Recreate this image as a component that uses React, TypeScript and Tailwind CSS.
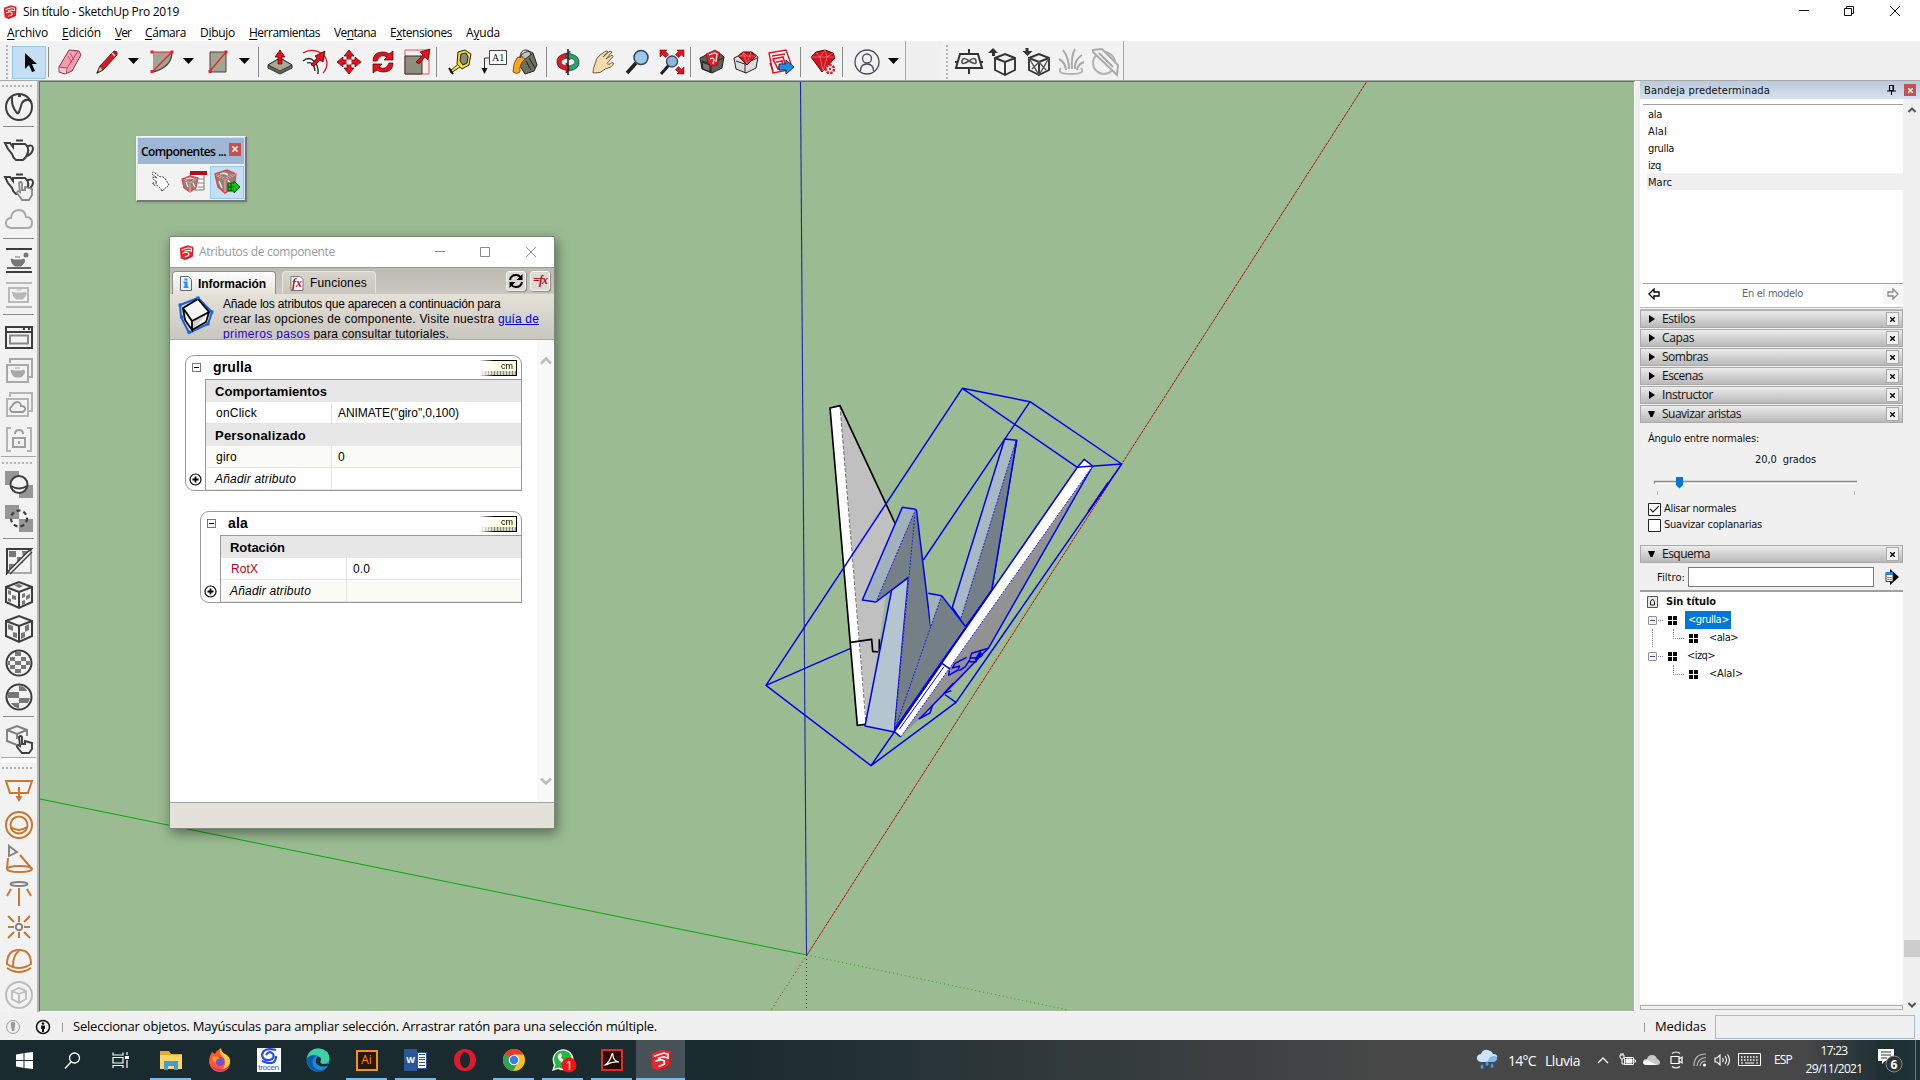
import React, { useLayoutEffect, useRef } from "react";

/* Text run whose tracking is computed so that it fills a given width. */
function T({ w, className = "", children }: { w: number; className?: string; children: React.ReactNode }) {
  const ref = useRef<HTMLSpanElement>(null);
  useLayoutEffect(() => {
    const el = ref.current;
    if (!el) return;
    el.style.letterSpacing = "0px";
    const n = (el.textContent || "").length;
    el.style.letterSpacing = `${(w - el.getBoundingClientRect().width) / n}px`;
  }, [w]);
  return (
    <span ref={ref} className={`inline-block shrink-0 whitespace-pre ${className}`}>
      {children}
    </span>
  );
}

const UI = "font-['Open_Sans',sans-serif]";
const TAHOMA = "font-['DejaVu_Sans_Condensed','DejaVu_Sans',sans-serif]";

function Svg({ s = 26, className = "", children }: { s?: number; className?: string; children: React.ReactNode }) {
  return (
    <svg width={s} height={s} viewBox={`0 0 ${s} ${s}`} fill="none" className={`block shrink-0 overflow-visible ${className}`}>
      {children}
    </svg>
  );
}

function Logo({ s = 14 }: { s?: number }) {
  return (
    <svg width={s} height={s} viewBox="0 0 14 14" className="block shrink-0">
      <path d="M.8 2.800L8 .3l5.500 1.500-.7 9.200L5.500 14l-4-1.700z" fill="#e8242c" />
      <path d="M2.500 4.600l6.300-2 2.700.7v2.400L8.600 5 5 6M3.200 7.800l3.600-1 2.300.7v2.200l-3.600 1.500" stroke="#fff" strokeWidth="1" fill="none" />
      <path d="M13 3l-.5 7.500-7 3" stroke="#b3141d" strokeWidth="0.600" fill="none" />
    </svg>
  );
}

/* ---------- top toolbar ---------- */

const R = "#e8101c";

const Eraser = () => (
  <Svg>
    <path d="M2 18L12 1l10 1 2 4-9 16-7 3-6-2z" fill="#f79cb0" stroke="#7d3a48" />
    <path d="M2 18l8 1L21 2M10 19l-1 6" stroke="#a04f60" />
    <path d="M2.500 19l7 .8-.8 4.700-6-2z" fill="#fbc3d0" />
    <path d="M13 4l4 7m-6-4l4 7" stroke="#a04f60" strokeWidth=".8" />
  </Svg>
);
const Pencil = () => (
  <Svg>
    <path d="M3 24l3-7L20 2l3 1v3L9 21z" fill="#d41921" stroke="#5a1a1a" />
    <path d="M3 24l3-7 3 4z" fill="#e3c18f" stroke="#333" strokeWidth=".8" />
    <path d="M2 25l2-3 1 1z" fill="#111" />
    <path d="M18 4l3 3" stroke="#ddd" strokeWidth="1.500" />
  </Svg>
);
const Arc = () => (
  <Svg>
    <path d="M4 3h19q0 15-19 20z" fill="#a3a38f" />
    <path d="M23 3q0 15-19 20" stroke="#444" strokeWidth="1.300" />
    <path d="M23 3L3 23M3 3h20" stroke="#f01c26" strokeWidth="1.200" />
    <path d="M1.500 1.500h3v3h-3zM21.500 1.500h3v3h-3zM1.500 21h3v3h-3z" fill="#f01c26" />
  </Svg>
);
const RectTool = () => (
  <Svg>
    <path d="M5 3h16v20H5z" fill="#a3a38f" stroke="#444" />
    <path d="M21 3L5 22" stroke="#f01c26" strokeWidth="1.200" />
    <path d="M19.500 1.500h3v3h-3zM3.500 21h3v3h-3z" fill="#f01c26" />
  </Svg>
);
const PushPull = () => (
  <Svg>
    <path d="M1 16l12-7 12 7v3l-12 6-12-6z" fill="#66665a" stroke="#333" />
    <path d="M1 16l12-7 12 7-12 6z" fill="#a8a893" stroke="#333" />
    <path d="M11 15V8H8l5-7 5 7h-3v7z" fill={R} stroke="#400" strokeWidth=".7" />
  </Svg>
);
const FollowMe = () => (
  <Svg>
    <path d="M1 4C10-2 24 3 25 14q0 6-4 10" stroke={R} strokeWidth="1.300" />
    <path d="M1 12q6-5 11 0t4 13M5 14q7-2 8 8" stroke="#222" strokeWidth="1.300" />
    <path d="M9 16l6-7-2-2 10-5-2 11-3-2-6 6z" fill={R} stroke="#400" strokeWidth=".8" />
  </Svg>
);
const Move = () => (
  <Svg>
    <path d="M13 1l5 6h-3v4h4V8l6 5-6 5v-3h-4v4h3l-5 6-5-6h3v-4H7v3l-6-5 6-5v3h4V7H8z" fill={R} stroke="#400" strokeWidth=".7" />
    <path d="M10.500 10.500h5v5h-5z" fill="#f0f0f0" />
  </Svg>
);
const Rotate = () => (
  <Svg>
    <path d="M3 12q0-9 10-9 4 0 6 2l4-3v9h-9l3-3q-7-4-10 4z" fill={R} stroke="#400" strokeWidth=".7" />
    <path d="M23 14q0 9-10 9-4 0-6-2l-4 3v-9h9l-3 3q7 4 10-4z" fill={R} stroke="#400" strokeWidth=".7" />
  </Svg>
);
const Scale = () => (
  <Svg>
    <path d="M1 1h24v24H1z" fill="#f8eeee" stroke="#e8505a" />
    <path d="M1 7h17v18H1z" fill="#8f8f7d" stroke="#333" />
    <path d="M12 13l7-7-3-3 10-3-2 11-3-3-6 7z" fill={R} stroke="#400" strokeWidth=".7" />
  </Svg>
);
const Tape = () => (
  <Svg>
    <path d="M11 3l7-2 6 4-2 11-7 4-5-5z" fill="#f4dd1a" stroke="#222" />
    <path d="M14 5l5-1 2 4-1 6-4 2-3-4z" fill="#888" stroke="#222" />
    <path d="M10 16l-7 6 1 2 9-6" fill="#f4dd1a" stroke="#333" />
    <path d="M2 19l4 6" stroke="#111" strokeWidth="2" />
  </Svg>
);
const TextTool = () => (
  <Svg>
    <path d="M8.500 1.500h17v14h-17z" fill="#fff" stroke="#444" />
    <text x="11" y="11.500" fontSize="10" fontFamily="Liberation Serif" fill="#111">
      A1
    </text>
    <path d="M8 9H3.500v12" stroke="#333" />
    <path d="M.5 19h6l-3 6z" fill="#111" />
  </Svg>
);
const Bucket = () => (
  <Svg>
    <path d="M11 9l10-5 4 12-3 6-9 3-5-8z" fill="#6f6f60" stroke="#222" />
    <path d="M9 6q7-6 12-2l-9 7z" fill="#b9c4c4" stroke="#333" />
    <path d="M13 10Q9 6 5 9q-4 5-4 14 4 3 7 0-1-8 5-13z" fill="#f5a623" stroke="#6b3d00" strokeWidth=".8" />
    <path d="M17 9l6 10M14 12l5 9M8 9Q8 1 14 1q4 0 5 5" stroke="#222" />
  </Svg>
);
const Orbit = () => (
  <Svg>
    <path d="M12 4Q1 6 2 14q1 6 9 7v3l5-5-5-5v3q-5-1-5-4 0-3 6-4z" fill="#d3202c" stroke="#500" strokeWidth=".7" />
    <path d="M14 22q11-2 10-10-1-6-9-7V2l-5 5 5 4V9q5 1 5 4t-6 4z" fill="#2ba362" stroke="#043" strokeWidth=".7" />
    <path d="M13 0v26" stroke="#222" strokeWidth="1.600" />
  </Svg>
);
const Hand = () => (
  <Svg>
    <path
      d="M3 24q0-5 2-9 1-6 5-9l6-4 2 .5-5 5.500 7-6 2 1-6 7 6-4 1 1.500-6 7q1 2 5-1l2 1q-3 5-8 5l-6 4z"
      fill="#f3dcae"
      stroke="#5f5138"
      strokeWidth=".9"
    />
  </Svg>
);
const Zoom = () => (
  <Svg>
    <path d="M3 24l9-10" stroke="#222" strokeWidth="3.600" />
    <circle cx="17" cy="8.500" r="7" fill="#9fc6e8" stroke="#345" strokeWidth="1.500" />
  </Svg>
);
const ZoomExt = () => (
  <Svg>
    <path d="M2 25l8-9" stroke="#222" strokeWidth="3" />
    <circle cx="13" cy="12.500" r="5.500" fill="#8fb6d8" stroke="#345" strokeWidth="1.300" />
    <path d="M1 1h7L6.500 2.500l3 3-3 3-3-3L1 8zM25 1h-7l1.500 1.500-3 3 3 3 3-3L25 8zM25 25h-7l1.500-1.500-3-3 3-3 3 3L25 18z" fill={R} stroke="#400" strokeWidth=".5" />
  </Svg>
);
const Warehouse = ({ gem = false }: { gem?: boolean }) => (
  <Svg>
    <path d="M1 9l6-3 12-3 6 5-2 11-10 5-10-4z" fill={gem ? "#ddd" : "#5f5f54"} stroke="#222" />
    <path d="M3 12l9 3 12-6M12 15v9" stroke="#222" />
    {gem ? (
      <>
        <path d="M5 7l5-4h8l5 4-9 9z" fill="#cf1722" stroke="#500" />
        <path d="M5 7h18M10 3l4 12 4-12M8 7l3-3 3 3" stroke="#ff8080" strokeWidth=".7" />
      </>
    ) : (
      <>
        <path d="M7 5l9-4 5 3-3 12-8 2z" fill="#df1f29" stroke="#900" strokeWidth=".6" />
        <path d="M10 6q6-3 8-1l-1 8M11 10q4-2 4 1l-1 4" stroke="#fff" strokeWidth="1.200" />
        <path d="M3 13l8 3v7l-7-3z" fill="#77776a" stroke="#222" />
      </>
    )}
  </Svg>
);
const SendLayout = () => (
  <Svg>
    <path d="M1 4l17-3 5 14-2 6-16 3z" fill="#fff" stroke={R} strokeWidth="1.400" />
    <path d="M4 7l13-2M5 10l10-2 3 10-8 2zM8 13l6-1 1 5-5 1M2 14l3 8" stroke={R} strokeWidth="1.600" />
    <path d="M11 15h7v-4l8 7-8 7v-4h-7z" fill="#1e8fe8" stroke="#0a3a66" />
  </Svg>
);
const Gem = () => (
  <Svg>
    <path d="M1 8l5-5 9-2 8 3 2 5-13 14z" fill="#cf1722" stroke="#600" />
    <path d="M1 8h24M6 3l4 5 3 14M15 1l-5 7M23 4l-6 4-4 14M15 1l2 7" stroke="#ff7474" strokeWidth=".7" />
    <circle cx="20" cy="20" r="4" fill="#f0f0f0" stroke="#c62a33" strokeWidth="2.500" strokeDasharray="2.500 1" />
    <circle cx="20" cy="20" r="1.200" fill="#c62a33" />
  </Svg>
);
const User = () => (
  <Svg>
    <circle cx="13" cy="13" r="12" stroke="#4a4a5a" strokeWidth="1.300" />
    <circle cx="13" cy="9.500" r="4.500" stroke="#4a4a5a" strokeWidth="1.300" />
    <path d="M6.500 22q0-7 6.500-7t6.500 7" stroke="#4a4a5a" strokeWidth="1.300" />
  </Svg>
);

const Drop = ({ className = "" }: { className?: string }) => (
  <div className={`flex w-5 shrink-0 justify-center pb-[3px] ${className}`}>
    <svg width="11" height="6" viewBox="0 0 11 6">
      <path d="M0 0h11L5.500 6z" fill="#000" />
    </svg>
  </div>
);
const Tool = ({ className = "", children }: { className?: string; children: React.ReactNode }) => (
  <div className={`flex h-[34px] w-[34px] shrink-0 items-center justify-center ${className}`}>{children}</div>
);
const VSep = ({ className = "" }: { className?: string }) => <div className={`h-[30px] w-px shrink-0 bg-[#8a8a8a] ${className}`} />;
const VGrip = () => (
  <div className="flex w-[3px] shrink-0 flex-col gap-[2px]">
    {Array.from({ length: 9 }, (_, i) => (
      <div key={i} className="h-[2px] w-[2px] bg-[#b4b4b4]" />
    ))}
  </div>
);

const Cube = ({ arrow, children }: { arrow: string; children?: React.ReactNode }) => (
  <Svg s={28}>
    <path d="M6 10l10-4 10 4v12l-10 5-10-5zM6 10l10 4 10-4M16 14v13" stroke="#333" strokeWidth="1.900" />
    {children}
    <path d={arrow} fill="#333" />
  </Svg>
);

function TopToolbar() {
  return (
    <div className="flex h-[40px] shrink-0 border-b border-[#a9a9a9] bg-[#f0f0f0]">
      <div className="flex w-[906px] shrink-0 items-center border-r border-[#a9a9a9] bg-[#f2f2f2] pl-1.5 pt-[3px]">
        <VGrip />
        <div className="ml-[3px] flex h-[33px] w-[34px] shrink-0 items-center justify-center border border-[#90c8f6] bg-[#c5dff5]">
          <Svg>
            <path d="M9 4v16l4-4 3 7 3-1-3-7h5z" fill="#000" />
          </Svg>
        </div>
        <VSep className="ml-[2px]" />
        <Tool className="ml-[4px]"><Eraser /></Tool>
        <Tool className="ml-[3px]"><Pencil /></Tool>
        <Drop className="-ml-px" />
        <Tool className="ml-[2px]"><Arc /></Tool>
        <Drop className="-ml-px" />
        <Tool className="ml-[3px]"><RectTool /></Tool>
        <Drop className="-ml-px" />
        <VSep className="ml-[4px]" />
        <Tool className="ml-[4px]"><PushPull /></Tool>
        <Tool className="ml-px"><FollowMe /></Tool>
        <Tool><Move /></Tool>
        <Tool><Rotate /></Tool>
        <Tool><Scale /></Tool>
        <VSep className="ml-[2px]" />
        <Tool className="ml-[6px]"><Tape /></Tool>
        <Tool><TextTool /></Tool>
        <Tool className="-ml-[3px]"><Bucket /></Tool>
        <VSep className="ml-[4px]" />
        <Tool className="ml-[4px]"><Orbit /></Tool>
        <Tool className="ml-px"><Hand /></Tool>
        <Tool><Zoom /></Tool>
        <Tool className="ml-px"><ZoomExt /></Tool>
        <VSep className="ml-px" />
        <Tool className="ml-[4px]"><Warehouse /></Tool>
        <Tool><Warehouse gem /></Tool>
        <Tool className="ml-px"><SendLayout /></Tool>
        <VSep className="ml-[2px]" />
        <Tool className="ml-[5px]"><Gem /></Tool>
        <VSep className="ml-[2px]" />
        <Tool className="ml-[7px]"><User /></Tool>
        <Drop className="-ml-px" />
      </div>
      <div className="ml-[36px] flex w-[182px] shrink-0 items-center border-r border-[#a9a9a9] bg-[#f2f2f2] pl-[4px] pt-[3px]">
        <VGrip />
        <Tool className="ml-[3px]">
          <Svg s={28}>
            <path d="M5 6h18l4 14H1zM14 1v5m0 14v6M0 14h3m22 0h3" stroke="#333" strokeWidth="2" />
            <path d="M14 13q-6-5-7 0t7 0q6-5 7 0t-7 0z" stroke="#555" strokeWidth="1.700" />
          </Svg>
        </Tool>
        <Tool><Cube arrow="M4 0l5 5H6v3H3V5H-1z" /></Tool>
        <Tool>
          <Cube arrow="M2.500 0h3v3h4l-5 5-5-5h3z">
            <path d="M6 10l10 17 10-17M9 21l7-7 7 8" stroke="#555" strokeWidth="1.400" />
          </Cube>
        </Tool>
        <Tool>
          <Svg s={28}>
            <path d="M9 22Q8 14 2 11M12 21Q12 10 6 2M15 21Q14 8 18 1M18 21q-1-9 7-14M20 22q1-6 7-8" stroke="#a9a9a9" strokeWidth="2" />
            <path d="M4 20q-5 6 10 6t10-6" stroke="#b4b4b4" strokeWidth="2" />
          </Svg>
        </Tool>
        <Tool>
          <Svg s={28}>
            <circle cx="13" cy="15" r="11" stroke="#b4b4b4" strokeWidth="2" />
            <path d="M2 2l9-1 16 16-1 10L2 4zM8 5l14 14" fill="#f2f2f2" stroke="#a9a9a9" strokeWidth="1.900" />
          </Svg>
        </Tool>
      </div>
    </div>
  );
}

/* ---------- left toolbar ---------- */

const D = "#3d3d3d";
const G = "#a9a9a9";
const O = "#c87830";
const POT = "M8 7h12q4 3 3 8-1 5-5 8h-7q-3-2-4-6l-4-5L0 6h5l3 4zM11 3.500h7M23 9q5-2 5 3-1 5-6 7";
const POT_SMALL = "M8 12l3 1h7l3-1q2 3-3 7h-6q-3-1-4-7zM12 10h5";

const LTool = ({ children }: { children: React.ReactNode }) => (
  <div className="flex h-[34px] shrink-0 items-center justify-center">
    <Svg s={28}>{children}</Svg>
  </div>
);
const HSep = ({ className = "h-2" }: { className?: string }) => (
  <div className={`shrink-0 px-[2px] pt-[2px] ${className}`}>
    <div className="h-px bg-[#8a8a8a]" />
  </div>
);
const HGrip = ({ className = "" }: { className?: string }) => (
  <div className={`flex shrink-0 gap-[2px] pl-px ${className}`}>
    {Array.from({ length: 8 }, (_, i) => (
      <div key={i} className="h-[2px] w-[2px] bg-[#b4b4b4]" />
    ))}
  </div>
);
const Checker = ({ c }: { c: string[] }) => (
  <>
    {c.map((d) => (
      <path key={d} d={d} fill="#777" />
    ))}
  </>
);

function LeftToolbar() {
  return (
    <div className="flex w-[39px] shrink-0 flex-col border-r-2 border-[#b4b4b4] bg-[#f2f2f2] pl-px pr-px">
      <HGrip className="h-[9px] pt-[4px]" />
      <LTool>
        <circle cx="14" cy="14" r="13" stroke={D} strokeWidth="2" />
        <path d="M7 4q-1 9 5 16 1 1 2-1l3-9q3-5 9-2M13 3q3 0 3 0" stroke={D} strokeWidth="2" />
      </LTool>
      <HSep className="h-[10px]" />
      <LTool><path d={POT} stroke={D} strokeWidth="2" /></LTool>
      <LTool>
        <path d={POT} stroke={D} strokeWidth="2" />
        <path d="M14 12q2-2 3 0v7h3v-3l7 2v6l-3 5h-7l-5-7q0-3 3-1z" fill="#f2f2f2" stroke="#888" strokeWidth="1.800" />
      </LTool>
      <LTool><path d="M6 23q-6-1-5-6 1-4 5-4 1-8 8-8 6 0 7 7 6 0 6 6 0 5-5 5z" stroke={G} strokeWidth="2" /></LTool>
      <HSep />
      <LTool>
        <path d="M1 2h26M1 25h26" stroke={D} strokeWidth="2" />
        <path d="M2 21h24" stroke="#666" strokeWidth="2" />
        <circle cx="21" cy="8" r="2.500" fill="#777" />
        <path d={POT_SMALL} fill="#777" stroke="#777" transform="translate(-2)" />
      </LTool>
      <LTool>
        <path d="M1 2h26M1 26h26M4 7h19v14H4z" stroke="#b9b9b9" strokeWidth="2" />
        <path d={POT_SMALL} fill="#b9b9b9" stroke="#b9b9b9" transform="translate(-.5 -1)" />
      </LTool>
      <HSep />
      <LTool>
        <path d="M1 4h26v21H1zM1 9h26M18 6h2M23 6h2" stroke={D} strokeWidth="2" />
        <path d="M5 12.500h18v8H5z" stroke="#888" strokeWidth="2" />
      </LTool>
      <LTool>
        <path d="M5 6V2h22v18h-4" stroke={G} strokeWidth="2" />
        <path d="M2 8h21v17H2z" stroke={G} strokeWidth="2" />
        <path d={POT_SMALL} fill={G} stroke={G} transform="translate(-2 1)" />
      </LTool>
      <LTool>
        <path d="M5 6V2h22v18h-4M2 8h21v17H2z" stroke="#b4b4b4" strokeWidth="2" />
        <path d="M7 21q-4-3 0-6 2-4 6-4 3 1 3 4 5 0 4 4l-2 2z" stroke="#999" strokeWidth="1.800" />
      </LTool>
      <LTool>
        <path d="M6 3H2v23h4M22 3h4v23h-4" stroke="#b4b4b4" strokeWidth="2" />
        <path d="M8 13h12v9H8zM10 9q0-4 4-4t4 4" stroke="#a0a0a0" strokeWidth="2" />
        <path d="M14 16v3" stroke="#a0a0a0" strokeWidth="2" />
      </LTool>
      <div className="h-px shrink-0 bg-[#a9a9a9]" />
      <HGrip className="h-[11px] pt-[5px]" />
      <LTool>
        <path d="M0 0h14v14H0zM14 14h14v13H14z" fill="#969696" />
        <circle cx="14" cy="13.500" r="8.500" fill="#f2f2f2" stroke={D} strokeWidth="2" />
        <path d="M6 15q8 5 16 0" stroke={D} strokeWidth="2" />
      </LTool>
      <LTool>
        <path d="M0 0h14v14H0zM14 14h14v13H14z" fill="#969696" />
        <circle cx="14" cy="13.500" r="8" stroke={D} strokeWidth="2.200" strokeDasharray="4 3" />
      </LTool>
      <HSep />
      <LTool>
        <path d="M26 2v24H2" stroke={G} strokeWidth="2" />
        <Checker c={["M4 4h7v6H4z", "M12 10h6v6h-6z", "M17 4h7l-6 6z", "M4 17h7l-7 7z"]} />
        <path d="M2 26V2h24z" stroke={D} strokeWidth="2" />
        <path d="M25 5L5 25" stroke="#f2f2f2" strokeWidth="2" />
        <path d="M27 5L5 27" stroke={D} strokeWidth="1.500" />
      </LTool>
      <LTool>
        <path d="M1 6l13-5 13 5v15l-13 6-13-6zM1 6l13 5 13-5M14 11v16" stroke={D} strokeWidth="2" />
        <Checker c={["M3 9l3 1v4l-3-1z", "M7 14l4 1v4l-4-1z", "M3 17l3 1v3l-3-1z", "M17 13l3-1v4l-3 1z", "M21 15l4-2v4l-4 2z", "M17 20l3-1v4l-3 1z", "M9 4l5-1 4 2-4 2z"]} />
      </LTool>
      <LTool>
        <path d="M1 6l13-5 13 5v15l-13 6-13-6zM1 6l13 5 13-5M14 11v16" stroke={D} strokeWidth="2" />
        <Checker c={["M3 9l5 2v5l-5-2z", "M8 17l4 1v5l-4-1z", "M20 11l4-2v6l-4 2z", "M16 18l4-1v5l-4 2z"]} />
      </LTool>
      <LTool>
        <circle cx="14" cy="14" r="12.500" stroke={D} strokeWidth="2" />
        <Checker c={["M10 3h6v4h-6z", "M5 8h5v4H5z", "M16 8h5v4h-5z", "M10 12h6v4h-6z", "M3 12h2v4H3z", "M21 12h4v4h-4z", "M5 16h5v4H5z", "M16 16h5v4h-5z", "M10 20h6v4h-6z"]} />
      </LTool>
      <LTool>
        <circle cx="14" cy="14" r="12.500" stroke={D} strokeWidth="2" />
        <Checker c={["M14 3q6 0 8 5h-8z", "M3 9h11v6H3z", "M14 15h11l-2 5h-9z", "M6 20h8v5q-5 0-8-5z"]} />
      </LTool>
      <HSep />
      <LTool>
        <path d="M12 20l-10-4V5l10-4 10 4v6M2 5l10 4 10-4M12 9v5" stroke="#808080" strokeWidth="1.900" />
        <path d="M14 12q2-2 3 0v7h3v-3l7 2v6l-3 4h-7l-5-6q0-3 3-1z" fill="#f2f2f2" stroke={D} strokeWidth="1.900" />
      </LTool>
      <div className="mt-px h-[6px] shrink-0 border-t border-[#a9a9a9] bg-[#fafafa]" />
      <HGrip className="h-[11px] pt-[4px]" />
      <LTool>
        <path d="M1 4h26l-4 12H5zM14 10v11" stroke={O} strokeWidth="2" />
        <path d="M10.500 19h7l-3.500 6z" fill={O} />
      </LTool>
      <LTool>
        <circle cx="14" cy="14" r="13" stroke={O} strokeWidth="2" />
        <circle cx="14" cy="14" r="8.500" stroke={O} strokeWidth="2" />
        <path d="M6 16q8 6 16 0" stroke={O} strokeWidth="2" />
      </LTool>
      <LTool>
        <path d="M4 1l8 6-8 4z" stroke="#808080" strokeWidth="1.900" />
        <path d="M3 13l-1 11M15 10l12 14" stroke={O} strokeWidth="2" />
        <ellipse cx="14.500" cy="24" rx="12.500" ry="3" stroke={O} strokeWidth="2" />
      </LTool>
      <LTool>
        <ellipse cx="14" cy="5" rx="8.500" ry="2" stroke="#808080" strokeWidth="1.900" />
        <path d="M14 9v18M6 10l-4 7M22 10l4 7" stroke={O} strokeWidth="2" />
      </LTool>
      <LTool>
        <circle cx="14" cy="14" r="3.200" stroke="#808080" strokeWidth="1.900" />
        <path d="M14 3v6m0 10v6M3 14h6m10 0h6M3 3l6 6m10 10l6 6M3 25l6-6M19 9l6-6" stroke={O} strokeWidth="2" />
      </LTool>
      <LTool>
        <path d="M2 17Q2 3 14 3t12 14q-12 8-24 0zM8 19Q8 8 14 4M2 21q12 8 24 0" stroke={O} strokeWidth="2" />
      </LTool>
      <LTool>
        <circle cx="14" cy="14" r="13" stroke="#bdbdbd" strokeWidth="2" />
        <path d="M7 10l7-3 7 3v8l-7 4-7-4zM7 10l7 3 7-3M14 13v9" stroke="#bdbdbd" strokeWidth="1.900" />
      </LTool>
    </div>
  );
}

/* ---------- 3D viewport ---------- */

function Scene() {
  const B = "#0000f5";
  const dark = "#758086";
  return (
    <svg width="1594" height="929" viewBox="40 82 1594 929" className="block">
      <g strokeWidth="1">
        <path d="M800.500 82L806.500 955" stroke="#1c24b4" strokeWidth="1.100" />
        <path d="M807 955L1366.500 82" stroke="#b80808" strokeDasharray="3 .8" />
        <path d="M40 799L807 955" stroke="#08a808" />
        <path d="M807 955L1068 1010" stroke="#1f9a1f" strokeDasharray="1 3" />
        <path d="M807 955L771 1010" stroke="#b80808" strokeDasharray="1 3" />
        <path d="M806.500 955V1010" stroke="#1c24b4" strokeDasharray="1 3" />
      </g>
      <g transform="translate(740 370) scale(.33333)" strokeLinejoin="round">
        <path d="M300 108L466 462 420 800 380 1065z" fill="#c0c0c0" />
        <path d="M270 114l30-7 80 956-28 3z" fill="#fff" />
        <path d="M300 108L378 1062" stroke="#555" strokeWidth="2.500" strokeDasharray="12 5" />
        <path d="M466 462L300 107l-30 7 82 952 30-4M332 817l63-9 3 36 16 2M418 846v-38" fill="none" stroke="#000" strokeWidth="5" />
        <path
          d="M330 836L78 946 667 55 870 95 1145 282 648 997 393 1187 78 946M667 55l345 237 133-10M870 95L550 570M648 997l-36-25M393 1187L1012 292"
          fill="none"
          stroke={B}
          strokeWidth="4.500"
        />
        <g stroke={B} strokeWidth="4.500">
          <path d="M794 207l36 4-75 450-80 107-38-56z" fill="#a9b9c4" />
          <path d="M828 213L755 660 675 768 662 748z" fill={dark} stroke="none" />
          <path d="M828 213L662 748" strokeWidth="2.500" strokeDasharray="6 4" />
          <path d="M830 211L755 661" />
          <path d="M505 622l-50 38-80 408 88 18z" fill="#b5c5cf" />
          <path d="M487 412l40 6-119 278-41-6z" fill="#a1b2bc" stroke="none" />
          <path d="M527 418L505 622l-97 74z" fill={dark} stroke="none" />
          <path d="M527 418l-40-6-120 278 41 6 97-74" fill="none" />
          <path d="M527 418L572 770 463 1085 505 622z" fill={dark} stroke="none" />
          <path d="M527 418L408 696M524 440L463 1085" strokeWidth="2.500" strokeDasharray="6 4" />
          <path d="M529 418l43 352" />
          <path d="M565 670l40 7-33 93z" fill="#a1b2bc" stroke="none" />
          <path d="M565 670l40 7" />
          <path d="M605 677l70 91L463 1082 572 770z" fill={dark} stroke="none" />
          <path d="M605 677L463 1082" strokeWidth="2.500" strokeDasharray="6 4" />
          <path d="M605 677l70 91" />
          <path d="M1058 288L745 835 640 950 540 1045 482 1101z" fill="#929292" stroke="none" />
          <path d="M1058 288L745 835 540 1045" fill="none" />
          <path d="M1035 268l23 20L482 1101 463 1085 1012 290z" fill="#fff" stroke="none" />
          <path d="M1058 288L482 1101" strokeWidth="2.500" strokeDasharray="6 4" />
          <path d="M482 1101l-19-16L1012 292l21-24 25 20" fill="none" />
          <path d="M1012 292l46-4M603 878l28 20M463 1078L755 660" fill="none" />
          <path d="M470 1076L605 883M478 1078L612 890" strokeWidth="3" />
          <path d="M745 835l-50 15-5 15 22-2-4 12-20 0M680 862l-35 18-8 14 22-6-5 12-28 16 2-14M690 868l-14 22-18 12" fill="none" />
          <path d="M720 845l-14 24 20-12z" fill={B} />
          <path d="M640 940l-28 30 22-8M578 1005l-8 24-34 18" fill="none" />
          <path d="M1105 338L1045 425" strokeWidth="6" />
        </g>
      </g>
    </svg>
  );
}

/* ---------- floating windows ---------- */

function ComponentsPalette() {
  return (
    <div className="absolute left-[96px] top-[54px] h-[66px] w-[111px] border border-r-2 border-b-2 border-[#f4f8fb] border-r-[#777] border-b-[#777] bg-[#d8e4f0] p-px shadow-sm">
      <div className="flex h-[26px] items-center bg-[#9db7d4] pl-[3px]">
        <T w={85} className={`pt-px text-[12px] font-semibold ${UI}`}>Componentes ...</T>
        <div className="mb-[4px] ml-[3px] flex h-[13px] w-[12px] shrink-0 items-center justify-center bg-[#c75050]">
          <svg width="6" height="6" viewBox="0 0 6 6"><path d="M.5.5l5 5m0-5l-5 5" stroke="#fff" strokeWidth="1.500" /></svg>
        </div>
      </div>
      <div className="flex h-[36px] items-center bg-[#f2f2f2] pl-[5px]">
        <div className="flex w-[34px] justify-center">
          <Svg s={20}>
            <path d="M12 19q-3-5-6-6-4 0-3-2l4 0-2-3q-3-1-2-3l4 1-5-4q0-3 3-1l5 4q4-1 6 3l3 5z" fill="#fff" stroke="#333" strokeDasharray="2 1" />
          </Svg>
        </div>
        <div className="flex w-[33px] justify-center">
          <Svg s={26}>
            <path d="M9 4h14v17H13z" fill="#fff" stroke="#777" />
            <path d="M9 2h17v4H9z" fill="#b80d1a" />
            <path d="M16 10h7m-6 4h6m-6 4h6" stroke="#888" />
            <path d="M1 10l8-3 8 2-2 10-6 4-6-4z" fill="#8d8474" stroke="#e3404c" strokeWidth="1.200" />
            <path d="M3 11l6 3 7-4M9 14v9M5 13l2 5M12 14l2 4M5 10l4-1 4 1" stroke="#eee" strokeWidth="1.200" />
            <path d="M2 11l7 3 7-4M9 14v9" stroke="#e3404c" strokeWidth=".8" />
          </Svg>
        </div>
        <div className="flex h-[33px] w-[34px] items-center justify-center border border-[#90c8f6] bg-[#c5dff5]">
          <Svg s={26}>
            <path d="M1 5l12-4 9 4-2 13-9 6-7-6z" fill="#8d8474" stroke="#e3404c" strokeWidth="1.400" />
            <path d="M2 6l9 4 11-5M11 10v13M6 5l4-1 4 2M5 12l3 7M14 11l3 5" stroke="#eee" strokeWidth="1.500" />
            <path d="M2 6l9 4 11-5M11 10v13" stroke="#e3404c" />
            <path d="M14 14h6v-2l6 6-6 6v-2h-6z" fill="#12c412" stroke="#064d06" />
            <path d="M17 14v8M14 18h6" stroke="#064d06" />
          </Svg>
        </div>
      </div>
    </div>
  );
}

const Minus = () => (
  <div className="flex h-[9px] w-[9px] shrink-0 items-center justify-center border border-[#777] bg-white">
    <div className="h-px w-[5px] bg-black" />
  </div>
);
const Plus = () => (
  <svg width="13" height="13" viewBox="0 0 13 13" className="shrink-0">
    <circle cx="6.500" cy="6.500" r="5.500" fill="#fff" stroke="#000" strokeWidth="1.200" />
    <path d="M3.500 6.500h6m-3-3v6" stroke="#000" strokeWidth="1.800" />
  </svg>
);
const Ruler = () => (
  <div className="ml-auto mr-[4px] flex h-[16px] w-[38px] flex-col items-end border-r border-t border-b border-black bg-gradient-to-r from-white to-[#ffffd0] [mask-image:linear-gradient(to_right,transparent,black_40%)]">
    <span className="h-[10px] pr-[3px] pt-px text-[9px] leading-[9px]">cm</span>
    <div className="h-[4px] w-full bg-[repeating-linear-gradient(to_right,#8a8a78_0_1px,#d4d4bc_1px_3px)]" />
  </div>
);

type Row = { h?: string; k?: string; v?: string; w?: number; vw?: number; red?: boolean; alt?: boolean; add?: boolean };

function Card({ title, tw, rows, className }: { title: string; tw: number; rows: Row[]; className: string }) {
  return (
    <div className={`relative shrink-0 overflow-hidden rounded-l-[9px] rounded-tr-[9px] border border-[#999] bg-white ${className}`}>
      <div className="flex h-[23px] items-center pl-[6px]">
        <Minus />
        <T w={tw} className="ml-3 text-[14px] font-bold">{title}</T>
        <Ruler />
      </div>
      <div className="flex">
        <div className="flex w-[19px] shrink-0 flex-col justify-end pb-[4px] pl-[3px]">
          <Plus />
        </div>
        <div className="flex-1 border-l border-t border-[#999]">
          {rows.map((r, i) =>
            r.h ? (
              <div key={i} className="flex h-[22px] items-center bg-[#e7e7e7] pl-[9px] pt-px">
                <T w={r.w!} className="text-[13px] font-bold">{r.h}</T>
              </div>
            ) : (
              <div key={i} className={`flex h-[22px] items-center border-b border-[#e3e3e3] text-[12px] ${r.alt ? "bg-[#fafaf6]" : "bg-white"}`}>
                <div className={`flex h-full w-[126px] items-center border-r border-[#e3e3e3] ${r.add ? "pl-[9px] pt-px" : "pl-[10px]"}`}>
                  <T w={r.w!} className={r.add ? "italic" : r.red ? "text-[#c0001a]" : ""}>{r.k}</T>
                </div>
                <div className="pl-[6px]">{r.v && <T w={r.vw!}>{r.v}</T>}</div>
              </div>
            ),
          )}
        </div>
      </div>
    </div>
  );
}

function AttributesWindow() {
  return (
    <div className="absolute left-[129px] top-[154px] flex h-[593px] w-[386px] flex-col border border-[#7b8a78] bg-white font-['Liberation_Sans',sans-serif] text-black shadow-[2px_4px_12px_rgba(0,0,0,0.45)]">
      <div className="flex h-[30px] shrink-0 items-center pl-[9px]">
        <Logo s={15} />
        <T w={136} className={`ml-[5px] text-[12px] text-[#999] ${UI}`}>Atributos de componente</T>
        <svg width="104" height="12" viewBox="0 0 104 12" fill="none" stroke="#8a8a8a" className="ml-[100px]">
          <path d="M0 5.500h10M45.500 1.500h9v9h-9zM91 1l10 10m0-10L91 11" />
        </svg>
      </div>
      <div className="flex h-[27px] shrink-0 border-t border-[#999] bg-gradient-to-b from-[#bdbab3] to-[#cac7c0] pl-[2px] pt-[3px]">
        <div className="flex h-[24px] w-[104px] items-center rounded-t-[4px] border border-b-0 border-[#8f8f8f] bg-gradient-to-b from-white to-[#e4e1d9] pl-[7px]">
          <svg width="12" height="15" viewBox="0 0 12 15">
            <path d="M.5.5h8l3 3v11H.5z" fill="#eaf2fb" stroke="#666" />
            <path d="M4.500 2.500h3v2h-3zM3.500 5.500h4v5h1v1.500h-5v-1.500h1V7h-1z" fill="#1e90f0" />
          </svg>
          <T w={68} className="ml-[6px] text-[12px] font-bold">Información</T>
        </div>
        <div className="ml-[6px] flex h-[22px] w-[94px] items-center rounded-t-[4px] border border-b-0 border-[#e6e4de] bg-gradient-to-b from-[#d8d5ce] to-[#c8c5be] pl-[7px] pt-px">
          <svg width="14" height="15" viewBox="0 0 14 15">
            <path d="M1 .5h9l3 3v11H1z" fill="#fff" stroke="#777" />
            <text x="2" y="11" fontSize="12" fontStyle="italic" fontWeight="bold" fontFamily="Liberation Serif" fill="#b0101c">fx</text>
          </svg>
          <T w={57} className="ml-[6px] text-[12px]">Funciones</T>
        </div>
        <div className="ml-auto flex h-[20px] w-[20px] items-center justify-center rounded-[3px] border border-[#f4f4f0] bg-[#dedbd4] shadow-[1px_1px_1px_#8a8a8a]">
          <svg width="16" height="16" viewBox="0 0 16 16" fill="none">
            <path d="M2 7q1-5 6-5 3 0 4.500 2M14 9q-1 5-6 5-3 0-4.500-2" stroke="#000" strokeWidth="2" />
            <path d="M14.500 1v6h-6zM1.500 15V9h6z" fill="#000" />
          </svg>
        </div>
        <div className="ml-[4px] mr-[4px] flex h-[20px] w-[20px] items-center justify-center rounded-[3px] border border-[#f4f4f0] bg-[#dedbd4] pb-[2px] shadow-[1px_1px_1px_#8a8a8a]">
          <span className="font-['Liberation_Serif',serif] text-[12px] font-bold italic tracking-[-1px] text-[#b0101c]">=fx</span>
        </div>
      </div>
      <div className="flex h-[46px] shrink-0 overflow-hidden border-b border-[#aaa] bg-gradient-to-b from-[#e4e1d9] to-[#c9c6bf]">
        <svg width="38" height="40" viewBox="0 0 38 40" className="ml-[7px] mt-px shrink-0" fill="none">
          <path d="M3 10l18-7 14 14-4 12-19 9L4 22z" stroke="#1464d2" strokeWidth="2" />
          <path d="M6 13l15-9 11 13-17 9zM6 13l2 12 7 10V26M32 17l-3 10-14 8" fill="#f7f7f7" stroke="#000" strokeWidth="1.800" />
          <path d="M1.500 8.500h3v3h-3zM19.500 1.500h3v3h-3zM33.500 15.500h3v3h-3zM29.500 27.500h3v3h-3zM10.500 35.500h3v3h-3zM3.500 20.500h3v3h-3z" fill="#1464d2" />
        </svg>
        <div className="ml-[8px] mt-[3px] flex flex-col text-[12px] leading-[15px]">
          <T w={296}>Añade los atributos que aparecen a continuación para</T>
          <div className="flex">
            <T w={275}>crear las opciones de componente. Visite nuestra </T>
            <T w={41} className="text-[#0000cc] underline">guía de</T>
          </div>
          <div className="flex">
            <T w={87} className="text-[#2a00cc] underline">primeros pasos</T>
            <T w={139}> para consultar tutoriales.</T>
          </div>
        </div>
      </div>
      <div className="flex min-h-0 flex-1">
        <div className="flex flex-1 flex-col pl-[15px] pt-[15px]">
          <Card
            title="grulla"
            tw={39}
            className="h-[136px] w-[337px]"
            rows={[
              { h: "Comportamientos", w: 112 },
              { k: "onClick", w: 41, v: 'ANIMATE("giro",0,100)', vw: 121 },
              { h: "Personalizado", w: 91 },
              { k: "giro", w: 21, v: "0", vw: 7, alt: true },
              { k: "Añadir atributo", w: 81, add: true },
            ]}
          />
          <Card
            title="ala"
            tw={20}
            className="ml-[15px] mt-[20px] h-[92px] w-[322px]"
            rows={[
              { h: "Rotación", w: 55 },
              { k: "RotX", w: 27, v: "0.0", vw: 17, red: true },
              { k: "Añadir atributo", w: 81, alt: true, add: true },
            ]}
          />
        </div>
        <div className="flex w-[17px] flex-col items-center justify-between bg-[#f8f8f8] py-[16px]">
          <svg width="12" height="9" viewBox="0 0 12 9" fill="none"><path d="M1 7.500l5-5 5 5" stroke="#bcbcbc" strokeWidth="2.500" /></svg>
          <svg width="12" height="9" viewBox="0 0 12 9" fill="none"><path d="M1 1.500l5 5 5-5" stroke="#bcbcbc" strokeWidth="2.500" /></svg>
        </div>
      </div>
      <div className="h-[26px] shrink-0 border-t border-[#a5a5a5] bg-[#e4e1da]" />
    </div>
  );
}

/* ---------- right tray ---------- */

const Header = ({ label, w, open = false }: { label: string; w: number; open?: boolean }) => (
  <div className="mb-px flex h-[18px] shrink-0 items-center border border-[#a9a9a9] bg-gradient-to-b from-[#ececec] to-[#b9b9b9] pl-[7px] pr-[3px]">
    <svg width="8" height="8" viewBox="0 0 8 8">{open ? <path d="M0 1h7L4.500 7h-2z" /> : <path d="M1 0l6 4-6 4z" />}</svg>
    <T w={w} className={`ml-[6px] text-[12px] leading-[16px] ${UI}`}>{label}</T>
    <div className="ml-auto flex h-[14px] w-[13px] items-center justify-center border border-[#a9a9a9] bg-[#f0f0f0]">
      <svg width="5" height="5" viewBox="0 0 5 5"><path d="M0 0l5 5m0-5L0 5" stroke="#000" strokeWidth="1.300" /></svg>
    </div>
  </div>
);

const Quad = () => (
  <svg width="9" height="9" viewBox="0 0 9 9" className="shrink-0"><path d="M0 0h4v4H0zM5 0h4v4H5zM0 5h4v4H0zM5 5h4v4H5z" /></svg>
);
const TreeMinus = () => (
  <div className="flex h-[9px] w-[9px] shrink-0 items-center justify-center rounded-[1px] border border-[#919191] bg-[#f6f6f6]">
    <div className="h-px w-[5px] bg-[#3a4f9a]" />
  </div>
);

function Tray() {
  const items: [string, number][] = [["ala", 14], ["AlaI", 19], ["grulla", 26], ["izq", 13], ["Marc", 24]];
  return (
    <div className={`flex w-[280px] shrink-0 flex-col text-[11px] text-[#111] ${TAHOMA}`}>
      <div className="flex h-[18px] shrink-0 items-center bg-gradient-to-b from-[#b9cadc] to-[#d4e1f0] pl-[4px] pr-[4px]">
        <T w={126} className="pt-[2px]">Bandeja predeterminada</T>
        <svg width="9" height="10" viewBox="0 0 9 10" fill="none" stroke="#000" className="ml-auto">
          <path d="M2.500 .500h4v5h-4zM6 1v5M0 6h9M4.500 6v4" strokeWidth="1.100" />
        </svg>
        <div className="ml-[8px] flex h-[12px] w-[12px] items-center justify-center bg-[#c75050]">
          <svg width="5" height="5" viewBox="0 0 5 5"><path d="M0 0l5 5m0-5L0 5" stroke="#fff" strokeWidth="1.400" /></svg>
        </div>
      </div>
      <div className="flex min-h-0 flex-1">
        <div className="flex w-[263px] shrink-0 flex-col">
          <div className="flex h-[208px] shrink-0 flex-col bg-white pl-[3px] pt-[5px]">
            <div className="flex h-[180px] flex-col border-b border-t border-[#a0a0a0] pl-[4px]">
              {items.map(([s, w]) => (
                <div key={s} className={`flex h-[17px] shrink-0 items-center pl-px pt-[3px] ${s === "Marc" ? "bg-[#efefef]" : ""}`}>
                  <T w={w}>{s}</T>
                </div>
              ))}
            </div>
            <div className="flex h-[20px] items-center pl-[5px]">
              <svg width="12" height="12" viewBox="0 0 12 12" fill="none"><path d="M1 6l5-5v3h5v4H6v3z" stroke="#000" strokeWidth="1.300" /></svg>
              <T w={61} className="ml-[82px] text-[#666]">En el modelo</T>
              <div className="ml-auto flex h-full w-[20px] items-center justify-center bg-[#f6f6f6]">
                <svg width="12" height="12" viewBox="0 0 12 12" fill="none"><path d="M11 6L6 1v3H1v4h5v3z" stroke="#888" strokeWidth="1.300" /></svg>
              </div>
            </div>
          </div>
          <div className="h-[3px] shrink-0 border-b border-t border-[#bbb]" />
          <Header label="Estilos" w={33} />
          <Header label="Capas" w={32} />
          <Header label="Sombras" w={46} />
          <Header label="Escenas" w={41} />
          <Header label="Instructor" w={51} />
          <Header label="Suavizar aristas" w={79} open />
          <div className="flex h-[121px] shrink-0 flex-col items-start pl-[8px] pt-[6px]">
            <T w={111} className="h-[16px] leading-[18px]">Ángulo entre normales:</T>
            <T w={61} className="ml-[107px] mt-[5px] h-[16px] leading-[18px]">20,0  grados</T>
            <svg width="212" height="22" viewBox="0 0 212 22" className="mt-[9px]">
              <path d="M6.500 7.500V5.500H209" fill="none" stroke="#8e8e8e" strokeWidth="1.500" />
              <path d="M7 7.500h203" stroke="#fff" />
              <path d="M28 1h7v8l-3.500 3.500L28 9z" fill="#0078d7" />
              <path d="M9.500 15v4M206.500 15v4" stroke="#bbb" />
            </svg>
            <div className="mt-[3px] flex h-4 items-center gap-[3px]">
              <svg width="13" height="13" viewBox="0 0 13 13"><path d="M.5.5h12v12H.5z" fill="#fff" stroke="#222" /><path d="M2 6l3 3 6-6" fill="none" stroke="#222" strokeWidth="1.200" /></svg>
              <T w={72} className="pt-px">Alisar normales</T>
            </div>
            <div className="flex h-4 items-center gap-[3px]">
              <svg width="13" height="13" viewBox="0 0 13 13"><path d="M.5.5h12v12H.5z" fill="#fff" stroke="#222" /></svg>
              <T w={98}>Suavizar coplanarias</T>
            </div>
          </div>
          <Header label="Esquema" w={48} open />
          <div className="flex h-[28px] shrink-0 items-center border-b-2 border-[#a0a0a0] pl-[17px]">
            <T w={28} className="pt-[2px]">Filtro:</T>
            <div className="ml-[3px] h-[20px] w-[186px] border border-[#7a7a7a] bg-white" />
            <svg width="14" height="16" viewBox="0 0 14 16" className="ml-[11px]">
              <path d="M5 0l9 8-9 8z" />
              <path d="M1 3.500h7v9H1z" fill="#fff" stroke="#334" />
              <path d="M1 3h7v3H1z" fill="#2a7fe0" />
              <path d="M2 8.500h5M2 10.500h5" stroke="#88a" />
            </svg>
          </div>
          <div className="flex min-h-0 flex-1 flex-col bg-white pt-px">
            <div className="flex h-[18px] items-center pl-[7px]">
              <svg width="11" height="12" viewBox="0 0 11 12" fill="none" stroke="#555"><path d="M.5.5h10v11H.5z" fill="#e8e8e8" /><path d="M3.500 9V5.500L5.500 3l2 2.500V9z" stroke="#222" /></svg>
              <T w={50} className="ml-[8px] pt-px font-bold">Sin título</T>
            </div>
            <div className="flex h-[18px] items-center pl-[8px]">
              <TreeMinus />
              <div className="ml-px w-[5px] border-t border-dotted border-[#888]" />
              <div className="ml-[5px]"><Quad /></div>
              <div className="ml-[8px] flex h-[18px] w-[46px] items-center bg-[#0078d7] pl-[3px] pt-px text-white"><T w={41}>&lt;grulla&gt;</T></div>
            </div>
            <div className="flex h-[18px] items-center pl-[12px]">
              <div className="h-full border-l border-dotted border-[#888]" />
              <div className="mb-[8px] ml-[20px] h-[10px] w-[11px] border-b border-l border-dotted border-[#888]" />
              <div className="ml-[5px]"><Quad /></div>
              <T w={29} className="ml-[11px] pt-px">&lt;ala&gt;</T>
            </div>
            <div className="flex h-[18px] items-center pl-[8px]">
              <TreeMinus />
              <div className="ml-px w-[5px] border-t border-dotted border-[#888]" />
              <div className="ml-[5px]"><Quad /></div>
              <T w={28} className="ml-[10px] pt-px">&lt;izq&gt;</T>
            </div>
            <div className="flex h-[18px] items-center pl-[33px]">
              <div className="mb-[8px] h-[10px] w-[11px] border-b border-l border-dotted border-[#888]" />
              <div className="ml-[5px]"><Quad /></div>
              <T w={34} className="ml-[11px] pt-px">&lt;AlaI&gt;</T>
            </div>
          </div>
          <div className="mb-[2px] mt-px h-[5px] shrink-0 border border-[#b0b0b0] bg-[#f0f0f0]" />
        </div>
        <div className="ml-px flex flex-1 flex-col items-center bg-[#f0f0f0] pt-[8px]">
          <svg width="8" height="6" viewBox="0 0 8 6" fill="none"><path d="M.5 5L4 1.500 7.500 5" stroke="#555" strokeWidth="2" /></svg>
          <div className="mt-[827px] h-[17px] w-full bg-[#cdcdcd]" />
          <svg width="8" height="6" viewBox="0 0 8 6" fill="none" className="mt-[45px]"><path d="M.5 1L4 4.500 7.500 1" stroke="#555" strokeWidth="2" /></svg>
        </div>
      </div>
    </div>
  );
}

/* ---------- taskbar ---------- */

const Slot = ({ on = false, active = false, children }: { on?: boolean; active?: boolean; children?: React.ReactNode }) => (
  <div className={`relative flex h-full w-[49px] shrink-0 items-center justify-center ${active ? "bg-[#465256]" : ""}`}>
    {children}
    {on && <div className={`absolute bottom-0 h-[2px] bg-[#76b9ed] ${active ? "inset-x-0" : "inset-x-[4px]"}`} />}
  </div>
);

function Taskbar() {
  return (
    <div className={`flex h-[40px] shrink-0 items-center bg-[linear-gradient(to_right,#1a2b30_0%,#1a2b30_38%,#474747_72%,#474747_94%,#1e2f33_98%,#1e3338_100%)] text-white ${UI}`}>
      <div className="flex w-[48px] justify-center">
        <svg width="17" height="17" viewBox="0 0 17 17" fill="#fff"><path d="M0 2.500L7.500 1.300V8H0zM8.500 1.100L17 0v8H8.500zM0 9h7.500v6.700L0 14.500zM8.500 9H17v8l-8.500-1.100z" /></svg>
      </div>
      <div className="flex w-[48px] justify-center">
        <svg width="17" height="17" viewBox="0 0 17 17" fill="none" stroke="#fff" strokeWidth="1.300"><circle cx="10.500" cy="6" r="5" /><path d="M7 10l-6 6.500" /></svg>
      </div>
      <div className="flex w-[50px] justify-center pr-[2px]">
        <svg width="17" height="16" viewBox="0 0 17 16" fill="none" stroke="#fff" strokeWidth="1.200"><path d="M1 .5V3h10V.5M1 5.500h10v5.500H1zM1 16v-2.500h10V16M15 0v3M15 8v8" /><path d="M13.500 4.500h3v2h-3z" fill="#fff" /></svg>
      </div>
      <Slot on>
        <Svg s={24}>
          <path d="M1 3h9l2 3h11v14H1z" fill="#e8a82c" />
          <path d="M1 7h22v14H1z" fill="#fbd768" />
          <path d="M5 13h14v9h-4v-4H9v4H5z" fill="#3f9ce0" />
        </Svg>
      </Slot>
      <Slot>
        <Svg s={24}>
          <path d="M2 8l2-4 3 2q2-4 6-6 0 4 4 6 6 3 5 10-2 8-10 8T1 15q0-4 1-7z" fill="#ff5a2f" />
          <path d="M13 0q0 4 4 6 6 3 5 9-2 6-7 6 5-8-2-14-2-3 0-7z" fill="#ffc93a" />
          <path d="M2 16q4 8 12 7 6-1 8-7-4 6-10 5-7-1-10-5z" fill="#e0307a" />
          <circle cx="12" cy="13.500" r="4.500" fill="#7a4ad8" />
          <path d="M4 9q6-2 8 2-4-1-4 4-4-2-4-6z" fill="#ff9a28" />
        </Svg>
      </Slot>
      <Slot>
        <div className="flex h-[24px] w-[24px] flex-col items-center bg-white">
          <svg width="18" height="17" viewBox="0 0 18 17" fill="none" stroke="#2a50e0" strokeWidth="2.200"><path d="M16 2Q3-1 2 7q1 6 8 5 5-2 3-6-4-4-7 1M2 13q14 6 14-5" /></svg>
          <span className="font-['Liberation_Sans',sans-serif] text-[8px] leading-[6px] tracking-[-0.3px] text-[#2a50e0]">trocen</span>
        </div>
      </Slot>
      <Slot>
        <Svg s={24}>
          <circle cx="12" cy="12" r="11.500" fill="#1c88d8" />
          <path d="M1 9Q4 0 13 .5q10 1 10.500 10Q23 16 16 16q-3 0-2-3 1-5-4-6-6-1-9 5z" fill="#3fd0a4" />
          <path d="M10 8q-6 5-2 11 4 5 11 2-6 4-12 1Q0 18 1 10q4-4 9-2z" fill="#0c59a4" />
          <path d="M11 9q-3 5 1 8 5 3 11 0 1-2-6-1-4-1-2-4 0-4-4-3z" fill="#1a2b30" />
        </Svg>
      </Slot>
      <Slot on>
        <div className="flex h-[21px] w-[22px] items-center justify-center border-2 border-[#f7901e] bg-[#2b1600] text-[12px] leading-none text-[#f7901e]">Ai</div>
      </Slot>
      <Slot on>
        <div className="flex h-[22px] w-[23px] items-center">
          <div className="flex h-[22px] w-[13px] items-center justify-center bg-[#2b579a] text-[9px] font-bold">W</div>
          <div className="flex h-[17px] w-[10px] flex-col justify-evenly border border-[#2b579a] bg-white px-px">
            {[0, 1, 2, 3, 4].map((i) => <div key={i} className="h-px bg-[#2b579a]" />)}
          </div>
        </div>
      </Slot>
      <Slot>
        <Svg s={24}>
          <path d="M12 1C5 1 1 6 1 12s4 11 11 11 11-5 11-11S19 1 12 1zm0 3c3 0 5 4 5 8s-2 8-5 8-5-4-5-8 2-8 5-8z" fill="#e3182c" fillRule="evenodd" />
        </Svg>
      </Slot>
      <Slot on>
        <Svg s={24}>
          <circle cx="12" cy="12" r="11" fill="#fbc116" />
          <path d="M12 12L2.500 6.500A11 11 0 0 1 21.500 6.500H12z" fill="#e33b2e" />
          <path d="M12 12L2.500 6.500A11 11 0 0 0 11 23l5-8.500z" fill="#2ba24c" />
          <circle cx="12" cy="12" r="5.300" fill="#fff" />
          <circle cx="12" cy="12" r="4.200" fill="#3b7ded" />
        </Svg>
      </Slot>
      <Slot on>
        <Svg s={24}>
          <path d="M1 23l2-6A10.500 10.500 0 1 1 7 21z" fill="#fff" />
          <path d="M3 21l1.500-4.500A9 9 0 1 1 8 19.500z" fill="#25b840" />
          <path d="M8 6q-3 3 1 7t7 2l1-2-3-2-1 1q-3-1-3-3l1-1-1-3z" fill="#fff" />
          <circle cx="18" cy="17" r="7.500" fill="#f01414" />
          <text x="14.500" y="22" fontSize="13" fontFamily="Open Sans" fill="#fff">1</text>
        </Svg>
      </Slot>
      <Slot on>
        <Svg s={24}>
          <path d="M2 2h20v20H2z" fill="#2a0503" stroke="#e8291c" strokeWidth="2" />
          <path d="M5 17q5-3 7-11 1-1 1 1 0 6 6 7-7-1-13 3z" stroke="#fff" strokeWidth="1.200" />
        </Svg>
      </Slot>
      <Slot on active><Logo s={22} /></Slot>

      <div className="ml-auto flex h-full shrink-0 items-center">
        <svg width="22" height="22" viewBox="0 0 22 22">
          <path d="M5 13q-5-1-4-5 1-3 4-3 2-5 7-4 4 1 5 4 5 0 4 4-1 4-4 4z" fill="#c9e2f8" />
          <path d="M12 13q0-5 5-6 5 0 4 3-1 3-4 3z" fill="#7db8ee" />
          <path d="M6 15q-3 4 0 5 3-1 0-5zM11 12q-3 4 0 5 3-1 0-5zM16 14q-3 4 0 5 3-1 0-5z" fill="#3c9df0" />
        </svg>
        <T w={28} className="ml-[10px] text-[14px]">14°C</T>
        <T w={35} className="ml-[9px] text-[14px]">Lluvia</T>
        <svg width="12" height="8" viewBox="0 0 12 8" fill="none" stroke="#fff" strokeWidth="1.300" className="ml-[17px]"><path d="M1 7l5-5 5 5" /></svg>
        <svg width="17" height="14" viewBox="0 0 17 14" fill="none" stroke="#fff" className="ml-[10px]"><path d="M5.500 4.500h9v7h-9zM15 7h1.500v2H15M1 2h4v2q0 2-2 2t-2-2zM2 0v2M4 0v2M3 6v5h3" /><path d="M7 6h6v4H7z" fill="#fff" /></svg>
        <svg width="17" height="12" viewBox="0 0 17 12" className="ml-[7px]"><path d="M4 11Q0 11 0 8t4-3q1-4 5-4t5 4q3 1 3 3.500T14 11z" fill="#c9c9c9" /><path d="M4 11Q0 11 0 8l4-2 10 5z" fill="#fff" /></svg>
        <svg width="13" height="18" viewBox="0 0 13 18" fill="none" stroke="#fff" strokeWidth="1.200" className="ml-[10px]"><path d="M1 5.500h8v7H1zM9 8l3-2v6l-3-2M2 2.500q4-3 8 0M2 15.500q4 3 8 0" /></svg>
        <svg width="14" height="14" viewBox="0 0 14 14" fill="none" stroke="#bbb" strokeWidth="1.200" className="ml-[10px]"><path d="M1 13Q1 1 13 1M4 13Q5 5 13 4.500M7 13q1-5 6-5" /><circle cx="11.500" cy="12" r="1.500" fill="#fff" stroke="none" /></svg>
        <svg width="17" height="14" viewBox="0 0 17 14" fill="none" stroke="#fff" strokeWidth="1.100" className="ml-[7px]"><path d="M1 5v4h2l3 3V2L3 5zM8.500 5q1.500 2 0 4M11 3q3 4 0 8M13.500 1.500q4 5.500 0 11" /></svg>
        <svg width="24" height="14" viewBox="0 0 24 14" fill="none" stroke="#fff" className="ml-[7px]"><path d="M.5.5h22v12H.5z" /><path d="M3 4h18M3 7h18" strokeDasharray="1.500 1.500" strokeWidth="1.300" /><path d="M3 10h2m2 0h9m2 0h2" /></svg>
        <T w={18} className="ml-[12px] text-[12px]">ESP</T>
        <div className="ml-[13px] flex w-[58px] flex-col items-center text-[12px] leading-[18px]">
          <T w={27}>17:23</T>
          <T w={57}>29/11/2021</T>
        </div>
        <div className="relative ml-[15px] mr-[12px] h-[24px] w-[25px]">
          <svg width="25" height="25" viewBox="0 0 25 25">
            <path d="M0 1h16v12H7l-3 3v-3H0z" fill="#fff" />
            <path d="M3 4h10M3 7h10M3 10h6" stroke="#333" strokeWidth="1.200" />
            <circle cx="16" cy="16" r="8" fill="#2b3436" stroke="#888" />
            <text x="12.500" y="20.500" fontSize="12" fontWeight="bold" fontFamily="Open Sans" fill="#fff">6</text>
          </svg>
        </div>
        <div className="mr-[4px] h-full w-px bg-[#6a7678]" />
      </div>
    </div>
  );
}

/* ---------- page ---------- */

const MENU: [string, string, string, number, string][] = [
  ["", "A", "rchivo", 41, "w-[55px]"],
  ["", "E", "dición", 39, "w-[53px]"],
  ["", "V", "er", 16, "w-[30px]"],
  ["", "C", "ámara", 41, "w-[55px]"],
  ["D", "i", "bujo", 35, "w-[49px]"],
  ["", "H", "erramientas", 71, "w-[85px]"],
  ["Ve", "n", "tana", 42, "w-[56px]"],
  ["E", "x", "tensiones", 62, "w-[76px]"],
  ["A", "y", "uda", 34, "w-[48px]"],
];

export default function App() {
  return (
    <div className="flex h-[1080px] w-[1920px] flex-col overflow-hidden bg-[#f0f0f0] text-black">
      <div className={`flex h-[23px] shrink-0 items-center bg-white pl-[3px] text-[12px] ${UI}`}>
        <Logo s={14} />
        <T w={156} className="ml-[6px]">Sin título - SketchUp Pro 2019</T>
        <svg width="110" height="12" viewBox="0 0 110 12" fill="none" stroke="#111" className="ml-auto mr-[11px] mb-[2px]">
          <path d="M0 5.500h10M45.500 3.500h7v7h-7zM47.500 3.500v-2h7v7h-2M91 1l10 10m0-10L91 11" />
        </svg>
      </div>
      <div className={`flex h-[18px] shrink-0 items-center bg-white pl-[7px] pt-[2px] text-[12px] ${UI}`}>
        {MENU.map(([a, u, b, w, cls]) => (
          <div key={u + b} className={`flex shrink-0 ${cls}`}>
            <T w={w}>{a}<span className="underline underline-offset-2">{u}</span>{b}</T>
          </div>
        ))}
      </div>
      <TopToolbar />
      <div className="flex h-[931px] shrink-0">
        <LeftToolbar />
        <div className="relative w-[1596px] shrink-0 border-b border-l border-r border-t border-[#6b6b6b] border-b-white border-r-white bg-[#9bbc92]">
          <Scene />
          <ComponentsPalette />
          <AttributesWindow />
        </div>
        <div className="w-[5px] shrink-0" />
        <Tray />
      </div>
      <div className={`flex h-[28px] shrink-0 items-center bg-[#f0f0f0] pt-[2px] ${UI}`}>
        <svg width="46" height="16" viewBox="0 0 46 16" fill="none" className="ml-[5px]">
          <circle cx="8" cy="8" r="6.500" stroke="#999" />
          <path d="M8 3q3 0 2 4l-1 5H7L6 7q-1-4 2-4z" fill="#999" />
          <circle cx="38" cy="8" r="6.500" stroke="#111" strokeWidth="1.500" />
          <circle cx="38" cy="4.500" r="1.300" fill="#111" />
          <path d="M36 6.500h4V10h-1v3h-2v-3h-1z" fill="#111" />
        </svg>
        <div className="ml-[11px] h-[9px] w-px bg-[#999]" />
        <T w={584} className="ml-[10px] text-[13px]">Seleccionar objetos. Mayúsculas para ampliar selección. Arrastrar ratón para una selección múltiple.</T>
        <div className="ml-auto h-[9px] w-px bg-[#999]" />
        <T w={51} className="ml-[10px] text-[13px]">Medidas</T>
        <div className="ml-[9px] mr-[5px] h-[24px] w-[200px] border border-[#a9b9d0]" />
      </div>
      <Taskbar />
    </div>
  );
}
